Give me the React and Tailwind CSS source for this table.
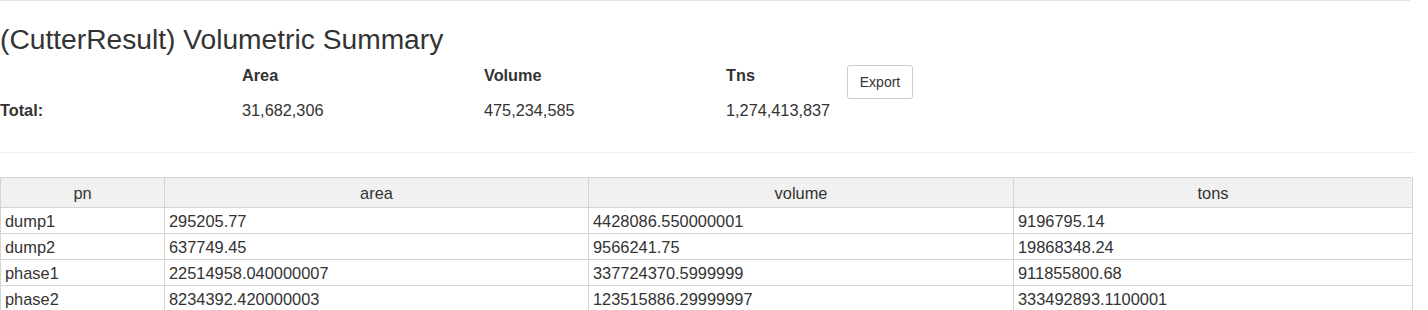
import React from 'react';

export default function App() {
  const totals = [
    { label: 'Area', value: '31,682,306' },
    { label: 'Volume', value: '475,234,585' },
    { label: 'Tns', value: '1,274,413,837' },
  ];

  const rows = [
    ['dump1', '295205.77', '4428086.550000001', '9196795.14'],
    ['dump2', '637749.45', '9566241.75', '19868348.24'],
    ['phase1', '22514958.040000007', '337724370.5999999', '911855800.68'],
    ['phase2', '8234392.420000003', '123515886.29999997', '333492893.1100001'],
  ];

  return (
    <div className="w-[1428px] h-[310px] overflow-hidden bg-white text-[#333] font-['Liberation_Sans',Arial,sans-serif]">
      <div className="w-[1410px] border-t border-[#e5e5e5]" />

      {/* Title */}
      <h1 className="mt-[21px] text-[28.2px] leading-[34px] whitespace-nowrap">
        (CutterResult) Volumetric Summary
      </h1>

      {/* Totals */}
      <div className="flex mt-[5px] text-[16.3px]">
        <div className="w-[242px]">
          <div className="h-[36px]" />
          <div className="h-[26px] leading-[26px] font-bold">Total:</div>
        </div>
        {totals.map((t) => (
          <div key={t.label} className={t.label === 'Tns' ? 'w-[121px]' : 'w-[242px]'}>
            <div className="h-[36px] leading-[28px] font-bold">{t.label}</div>
            <div className="h-[26px] leading-[26px]">{t.value}</div>
          </div>
        ))}
        <div className="pt-[4px]">
          <button className="w-[66px] h-[34px] border border-[#ccc] rounded-[3px] bg-white text-[14px] text-[#333]">
            Export
          </button>
        </div>
      </div>

      <div className="mt-[29px] w-[1414px] border-t border-[#eee]" />

      {/* Table */}
      <table className="mt-[24px] w-[1413px] border-collapse text-[16.4px] table-fixed">
        <colgroup>
          <col className="w-[164px]" />
          <col className="w-[424px]" />
          <col className="w-[425px]" />
          <col />
        </colgroup>
        <thead>
          <tr className="bg-[#f1f1f1]">
            {['pn', 'area', 'volume', 'tons'].map((h) => (
              <th key={h} className="h-[30px] border border-[#d4d4d4] font-normal text-center leading-[20px]">
                {h}
              </th>
            ))}
          </tr>
        </thead>
        <tbody>
          {rows.map((r) => (
            <tr key={r[0]}>
              {r.map((c, i) => (
                <td key={i} className="h-[26px] border border-[#d4d4d4] px-[4px] py-0 leading-[20px]">
                  {c}
                </td>
              ))}
            </tr>
          ))}
        </tbody>
      </table>
    </div>
  );
}
